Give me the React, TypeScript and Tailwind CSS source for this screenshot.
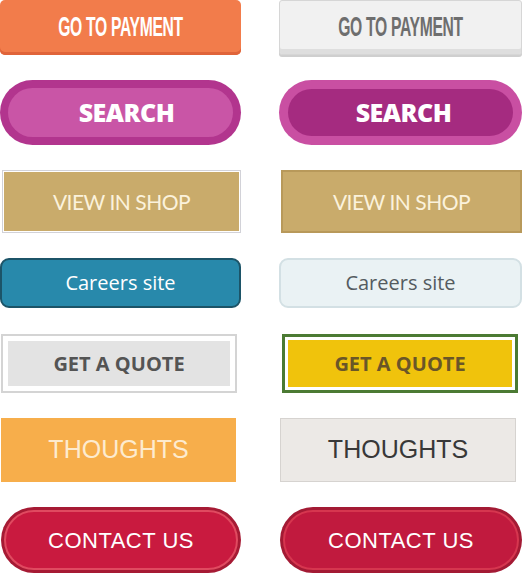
import React from 'react'

const condensed = "font-['Liberation_Sans',Arial,sans-serif] font-bold"

export default function App() {
  return (
    <div className="w-[522px] h-[575px] bg-white overflow-hidden">
      <div className="flex flex-col gap-[25px]">
        {/* go to payment */}
        <div className="grid grid-cols-[241px_243px] gap-x-[38px] h-[55px]">
          <div className="flex items-center justify-center rounded-[5px] bg-[#f27c4b] shadow-[inset_0_-3px_0_#e0643a]">
            <span className={`${condensed} inline-block text-[27px] text-white tracking-[-0.5px] scale-x-[0.58] whitespace-nowrap`}>
              GO TO PAYMENT
            </span>
          </div>
          <div className="flex items-center justify-center rounded-[3px] border border-[#d6d6d6] bg-[#f1f1f1] shadow-[inset_0_-5px_0_#dedede,0_2px_0_#cfcfcf]">
            <span className={`${condensed} inline-block text-[27px] text-[#6e6e6e] tracking-[-0.5px] scale-x-[0.58] whitespace-nowrap`}>
              GO TO PAYMENT
            </span>
          </div>
        </div>

        {/* search */}
        <div className="grid grid-cols-[241px_243px] gap-x-[38px] h-[65px]">
          <div className="rounded-full bg-[#b2358e] p-[8px]">
            <div className="h-full rounded-full bg-[#c955a6] flex items-center justify-center pl-[12px]">
              <span className="font-['Open_Sans',sans-serif] font-extrabold text-[25px] text-white tracking-[-0.5px]">SEARCH</span>
            </div>
          </div>
          <div className="rounded-full bg-[#c94fa2] p-[9px]">
            <div className="h-full rounded-full bg-[#a52b80] flex items-center justify-center pl-[6px]">
              <span className="font-['Open_Sans',sans-serif] font-extrabold text-[25px] text-white tracking-[-0.5px]">SEARCH</span>
            </div>
          </div>
        </div>

        {/* view in shop */}
        <div className="grid grid-cols-[241px_243px] gap-x-[38px] h-[63px]">
          <div className="ml-[2px] border border-[#d2d2d8] p-px">
            <div className="h-full bg-[#c9ab6b] flex items-center justify-center">
              <span className="font-['Lato',sans-serif] text-[21px] text-[#fbf2dc] tracking-[-0.5px]">VIEW IN SHOP</span>
            </div>
          </div>
          <div className="ml-[2px] border-2 border-[#b8995a] bg-[#c9ab6b] flex items-center justify-center">
            <span className="font-['Lato',sans-serif] text-[21px] text-[#fbf2dc] tracking-[-0.5px]">VIEW IN SHOP</span>
          </div>
        </div>

        {/* careers site */}
        <div className="grid grid-cols-[241px_243px] gap-x-[38px] h-[50px]">
          <div className="rounded-[9px] border-2 border-[#1c5468] bg-[#2889ab] flex items-center justify-center">
            <span className="font-['Open_Sans',sans-serif] text-[20px] text-white">Careers site</span>
          </div>
          <div className="rounded-[9px] border-2 border-[#d3e0e4] bg-[#eaf2f4] flex items-center justify-center">
            <span className="font-['Open_Sans',sans-serif] text-[20px] text-[#545b60]">Careers site</span>
          </div>
        </div>

        {/* get a quote */}
        <div className="grid grid-cols-[241px_243px] gap-x-[38px] h-[59px] mt-px">
          <div className="w-[236px] ml-px border-2 border-[#d4d4d4] bg-white p-[5px]">
            <div className="h-full bg-[#e3e3e3] flex items-center justify-center">
              <span className="font-['Open_Sans',sans-serif] font-bold text-[20px] text-[#545454]">GET A QUOTE</span>
            </div>
          </div>
          <div className="w-[236px] ml-[3px] border-[3px] border-[#4b7a33] bg-white p-[3px]">
            <div className="h-full bg-[#f0c30c] flex items-center justify-center">
              <span className="font-['Open_Sans',sans-serif] font-bold text-[20px] text-[#6a5628]">GET A QUOTE</span>
            </div>
          </div>
        </div>

        {/* thoughts */}
        <div className="grid grid-cols-[241px_243px] gap-x-[38px] h-[64px]">
          <div className="w-[235px] ml-px bg-[#f7ae4b] flex items-center justify-center">
            <span className="font-['Liberation_Sans',Arial,sans-serif] text-[25px] text-[#fdebcf]">THOUGHTS</span>
          </div>
          <div className="w-[236px] ml-px border border-[#d6d3d0] bg-[#ece9e6] flex items-center justify-center">
            <span className="font-['Liberation_Sans',Arial,sans-serif] text-[25px] text-[#383838]">THOUGHTS</span>
          </div>
        </div>

        {/* contact us */}
        <div className="grid grid-cols-[241px_243px] gap-x-[38px] h-[66px]">
          <div className="ml-px rounded-full bg-[#a61a34] p-[3px]">
            <div className="h-full rounded-full border-2 border-[#e04a60] bg-[#c91a3f] flex items-center justify-center">
              <span className="font-['Liberation_Sans',Arial,sans-serif] text-[22px] text-white tracking-[0.5px]">CONTACT US</span>
            </div>
          </div>
          <div className="ml-px rounded-full bg-[#a31a34] p-[3px]">
            <div className="h-full rounded-full border-2 border-[#d6364f] bg-[#c11a3e] flex items-center justify-center">
              <span className="font-['Liberation_Sans',Arial,sans-serif] text-[22px] text-white tracking-[0.5px]">CONTACT US</span>
            </div>
          </div>
        </div>
      </div>
    </div>
  )
}
